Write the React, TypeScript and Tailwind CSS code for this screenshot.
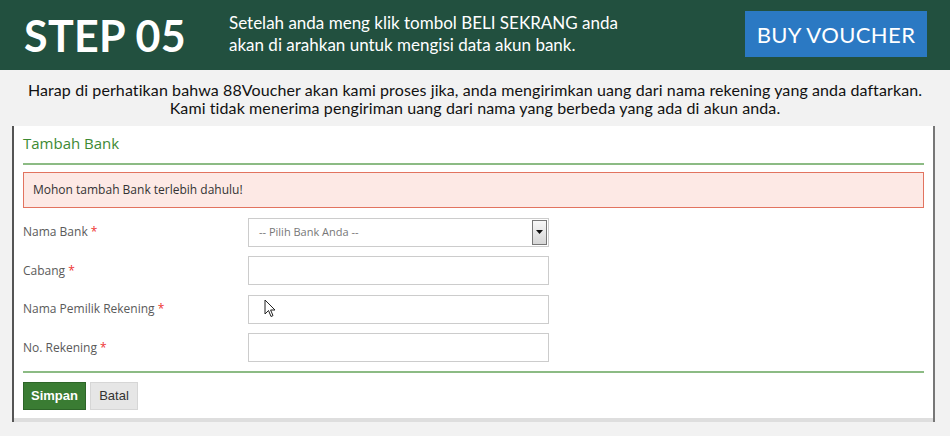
const fields = [
  { label: "Nama Bank", type: "select" },
  { label: "Cabang", type: "text" },
  { label: "Nama Pemilik Rekening", type: "text", cursor: true },
  { label: "No. Rekening", type: "text" },
];

const Cursor = () => (
  <svg className="absolute left-[15px] top-[3px]" width="12" height="19" viewBox="0 0 12 19">
    <path d="M1 1 L1 15 L4.5 11.5 L7 17.5 L9 16.6 L6.6 11 L11 11 Z" fill="#fff" stroke="#222" strokeWidth="1" strokeLinejoin="round" />
  </svg>
);

export default function App() {
  return (
    <div className="w-[950px] h-[436px] bg-[#f2f2f2] overflow-hidden" style={{ fontFamily: "Lato, 'Open Sans', sans-serif" }}>
      {/* Header */}
      <div className="h-[70px] bg-[#22503f] flex items-center pl-[24px] pr-[23px]">
        <div className="text-white font-bold text-[43px] leading-none tracking-[0.3px] w-[205px]">STEP 05</div>
        <div className="text-white text-[17px] leading-[22px] flex-1 pb-[3px]">
          Setelah anda meng klik tombol BELI SEKRANG anda
          <br />
          akan di arahkan untuk mengisi data akun bank.
        </div>
        <div className="bg-[#2b79c3] text-white text-[22px] h-[46px] w-[182px] flex items-center justify-center tracking-[0.4px] mb-[2px]">
          BUY VOUCHER
        </div>
      </div>

      {/* Notice */}
      <div className="text-center text-[#111] text-[16px] leading-[18px] pt-[11px] pb-[9px] tracking-[0.1px]">
        Harap di perhatikan bahwa 88Voucher akan kami proses jika, anda mengirimkan uang dari nama rekening yang anda daftarkan.
        <br />
        Kami tidak menerima pengiriman uang dari nama yang berbeda yang ada di akun anda.
      </div>

      {/* Panel */}
      <div className="ml-[12px] w-[923px] border-l-2 border-r-2 border-l-[#555] border-r-[#777]">
        <div className="bg-white border-b-[4px] border-[#dedede] px-[9px] pb-[8px]" style={{ fontFamily: "'Open Sans', 'Noto Sans', sans-serif" }}>
          <div className="text-[#3d8a34] text-[15px] pt-[6px] pb-[8px] border-b-2 border-[#8cbb84]">Tambah Bank</div>
          <div className="mt-[7px] h-[36px] bg-[#fde9e5] border border-[#e2735f] text-[#333] text-[12px] flex items-center pl-[9px]">
            Mohon tambah Bank terlebih dahulu!
          </div>
          <div className="flex flex-col gap-[9.5px] mt-[10px]">
            {fields.map((f) => (
              <div key={f.label} className="flex items-center h-[29px]">
                <div className="w-[225px] text-[#5a5a5a] text-[12px]">
                  {f.label} <span className="text-[#e33]">*</span>
                </div>
                {f.type === "select" ? (
                  <div className="relative w-[301px] h-[29px] border border-[#ccc] flex items-center text-[#777] text-[11px] pl-[10px]">
                    -- Pilih Bank Anda --
                    <div className="absolute right-[1px] top-[1px] w-[15px] h-[25px] bg-gradient-to-b from-[#f8f8f8] to-[#d6d6d6] border border-[#777] flex items-center justify-center">
                      <svg width="7" height="4" viewBox="0 0 7 4">
                        <path d="M0 0 L7 0 L3.5 4 Z" fill="#111" />
                      </svg>
                    </div>
                  </div>
                ) : (
                  <div className="relative w-[301px] h-[29px] border border-[#ccc]">{f.cursor && <Cursor />}</div>
                )}
              </div>
            ))}
          </div>
          <div className="mt-[9px] border-b-2 border-[#8cbb84]" />
          <div className="flex gap-[4px] mt-[9px]" style={{ fontFamily: "'Liberation Sans', Arial, sans-serif" }}>
            <button className="h-[28px] w-[63px] bg-[#3a7c33] border border-[#2d6528] text-white font-bold text-[13px]">Simpan</button>
            <button className="h-[28px] w-[48px] bg-[#e6e6e6] border border-[#d6d6d6] text-[#333] text-[13px]">Batal</button>
          </div>
        </div>
      </div>
    </div>
  );
}
